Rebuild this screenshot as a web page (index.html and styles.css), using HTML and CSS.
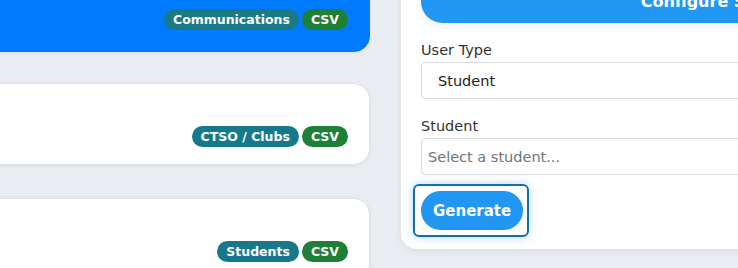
FILE: index.html
```html
<!DOCTYPE html>
<html>
<head>
    <meta charset="UTF-8">
    <title>Reports</title>
    <link rel="stylesheet" href="styles.css">
</head>
<body>
    <div class="page">
        <div class="report-list">
            <div class="report-card active">
                <div class="report-body"></div>
                <div class="badges">
                    <span class="badge category">Communications</span>
                    <span class="badge format">CSV</span>
                </div>
            </div>
            <div class="report-card">
                <div class="report-body"></div>
                <div class="badges">
                    <span class="badge category">CTSO / Clubs</span>
                    <span class="badge format">CSV</span>
                </div>
            </div>
            <div class="report-card">
                <div class="report-body"></div>
                <div class="badges">
                    <span class="badge category">Students</span>
                    <span class="badge format">CSV</span>
                </div>
            </div>
        </div>
        <div class="settings-panel">
            <button class="configure-btn">Configure Settings</button>
            <label class="field-label">User Type</label>
            <div class="field-box">Student</div>
            <label class="field-label">Student</label>
            <input type="text" class="field-input" placeholder="Select a student..." />
            <div class="focus-ring">
                <button class="generate-btn">Generate</button>
            </div>
        </div>
    </div>
</body>
</html>
```

FILE: styles.css
```css
body {
    margin: 0;
    background-color: #e9ecf1;
    font-family: "DejaVu Sans", sans-serif;
    overflow: hidden;
}

.page {
    display: flex;
    align-items: flex-start;
    gap: 31px;
    margin-left: -30px;
}

.report-list {
    flex: 0 0 400px;
    display: flex;
    flex-direction: column;
    gap: 31px;
    margin-top: -32px;
}

.report-card {
    background-color: #fff;
    border-radius: 16px;
    padding: 20px 21px 17px 20px;
    box-shadow: 0 1px 4px rgba(0, 0, 0, 0.06);
    border: 1px solid #dde2e8;
}

.report-card .report-body {
    height: 22px;
}

.report-card.active {
    background-color: #007bff;
    border-color: #007bff;
    padding-bottom: 21px;
}

.report-card.active .report-body {
    height: 20px;
}

.report-card:last-child {
    margin-top: 2px;
}

.badges {
    display: flex;
    justify-content: flex-end;
    gap: 3px;
}

.badge {
    color: #fff;
    font-size: 12.5px;
    font-weight: 600;
    line-height: 21px;
    padding: 0 9px;
    border-radius: 11px;
}

.badge.category {
    background-color: #16798a;
}

.report-card.active .badge.category {
    background-color: #197a85;
}

.badge.format {
    background-color: #1f7f37;
}

.settings-panel {
    flex: 0 0 648px;
    box-sizing: border-box;
    margin-top: -40px;
    background-color: #fff;
    border-radius: 16px;
    padding: 20px 20px 12px;
    box-shadow: 0 2px 8px rgba(0, 0, 0, 0.07);
    display: flex;
    flex-direction: column;
    align-items: flex-start;
}

.configure-btn {
    width: 100%;
    height: 43px;
    border: none;
    border-radius: 22px;
    background-color: #2196f3;
    color: #fff;
    font-family: inherit;
    font-size: 16px;
    font-weight: 600;
    padding: 0;
    box-shadow: 0 4px 10px rgba(0, 0, 0, 0.06);
}

.field-label {
    color: #333;
    font-size: 14.5px;
    line-height: 20px;
    margin-top: 17px;
    margin-bottom: 2px;
}

.field-box,
.field-input {
    box-sizing: border-box;
    width: 100%;
    height: 37px;
    border: 1px solid #d6dbe1;
    border-radius: 4px;
    font-family: inherit;
    font-size: 14.5px;
    color: #222;
    margin: 0;
}

.field-box {
    display: flex;
    align-items: center;
    padding-left: 16px;
}

.field-input {
    padding: 0 6px;
}

.field-input::placeholder {
    color: #6c757d;
}

.focus-ring {
    margin-top: 9px;
    margin-left: -8px;
    border: 2px solid #166ea6;
    border-radius: 6px;
    padding: 5px 4px 5px 6px;
    box-shadow: 0 0 10px rgba(33, 150, 243, 0.35);
    display: flex;
}

.generate-btn {
    height: 39px;
    border: none;
    border-radius: 20px;
    background-color: #2196f3;
    color: #fff;
    font-family: inherit;
    font-size: 15px;
    font-weight: 600;
    padding: 0 12px;
}
```
